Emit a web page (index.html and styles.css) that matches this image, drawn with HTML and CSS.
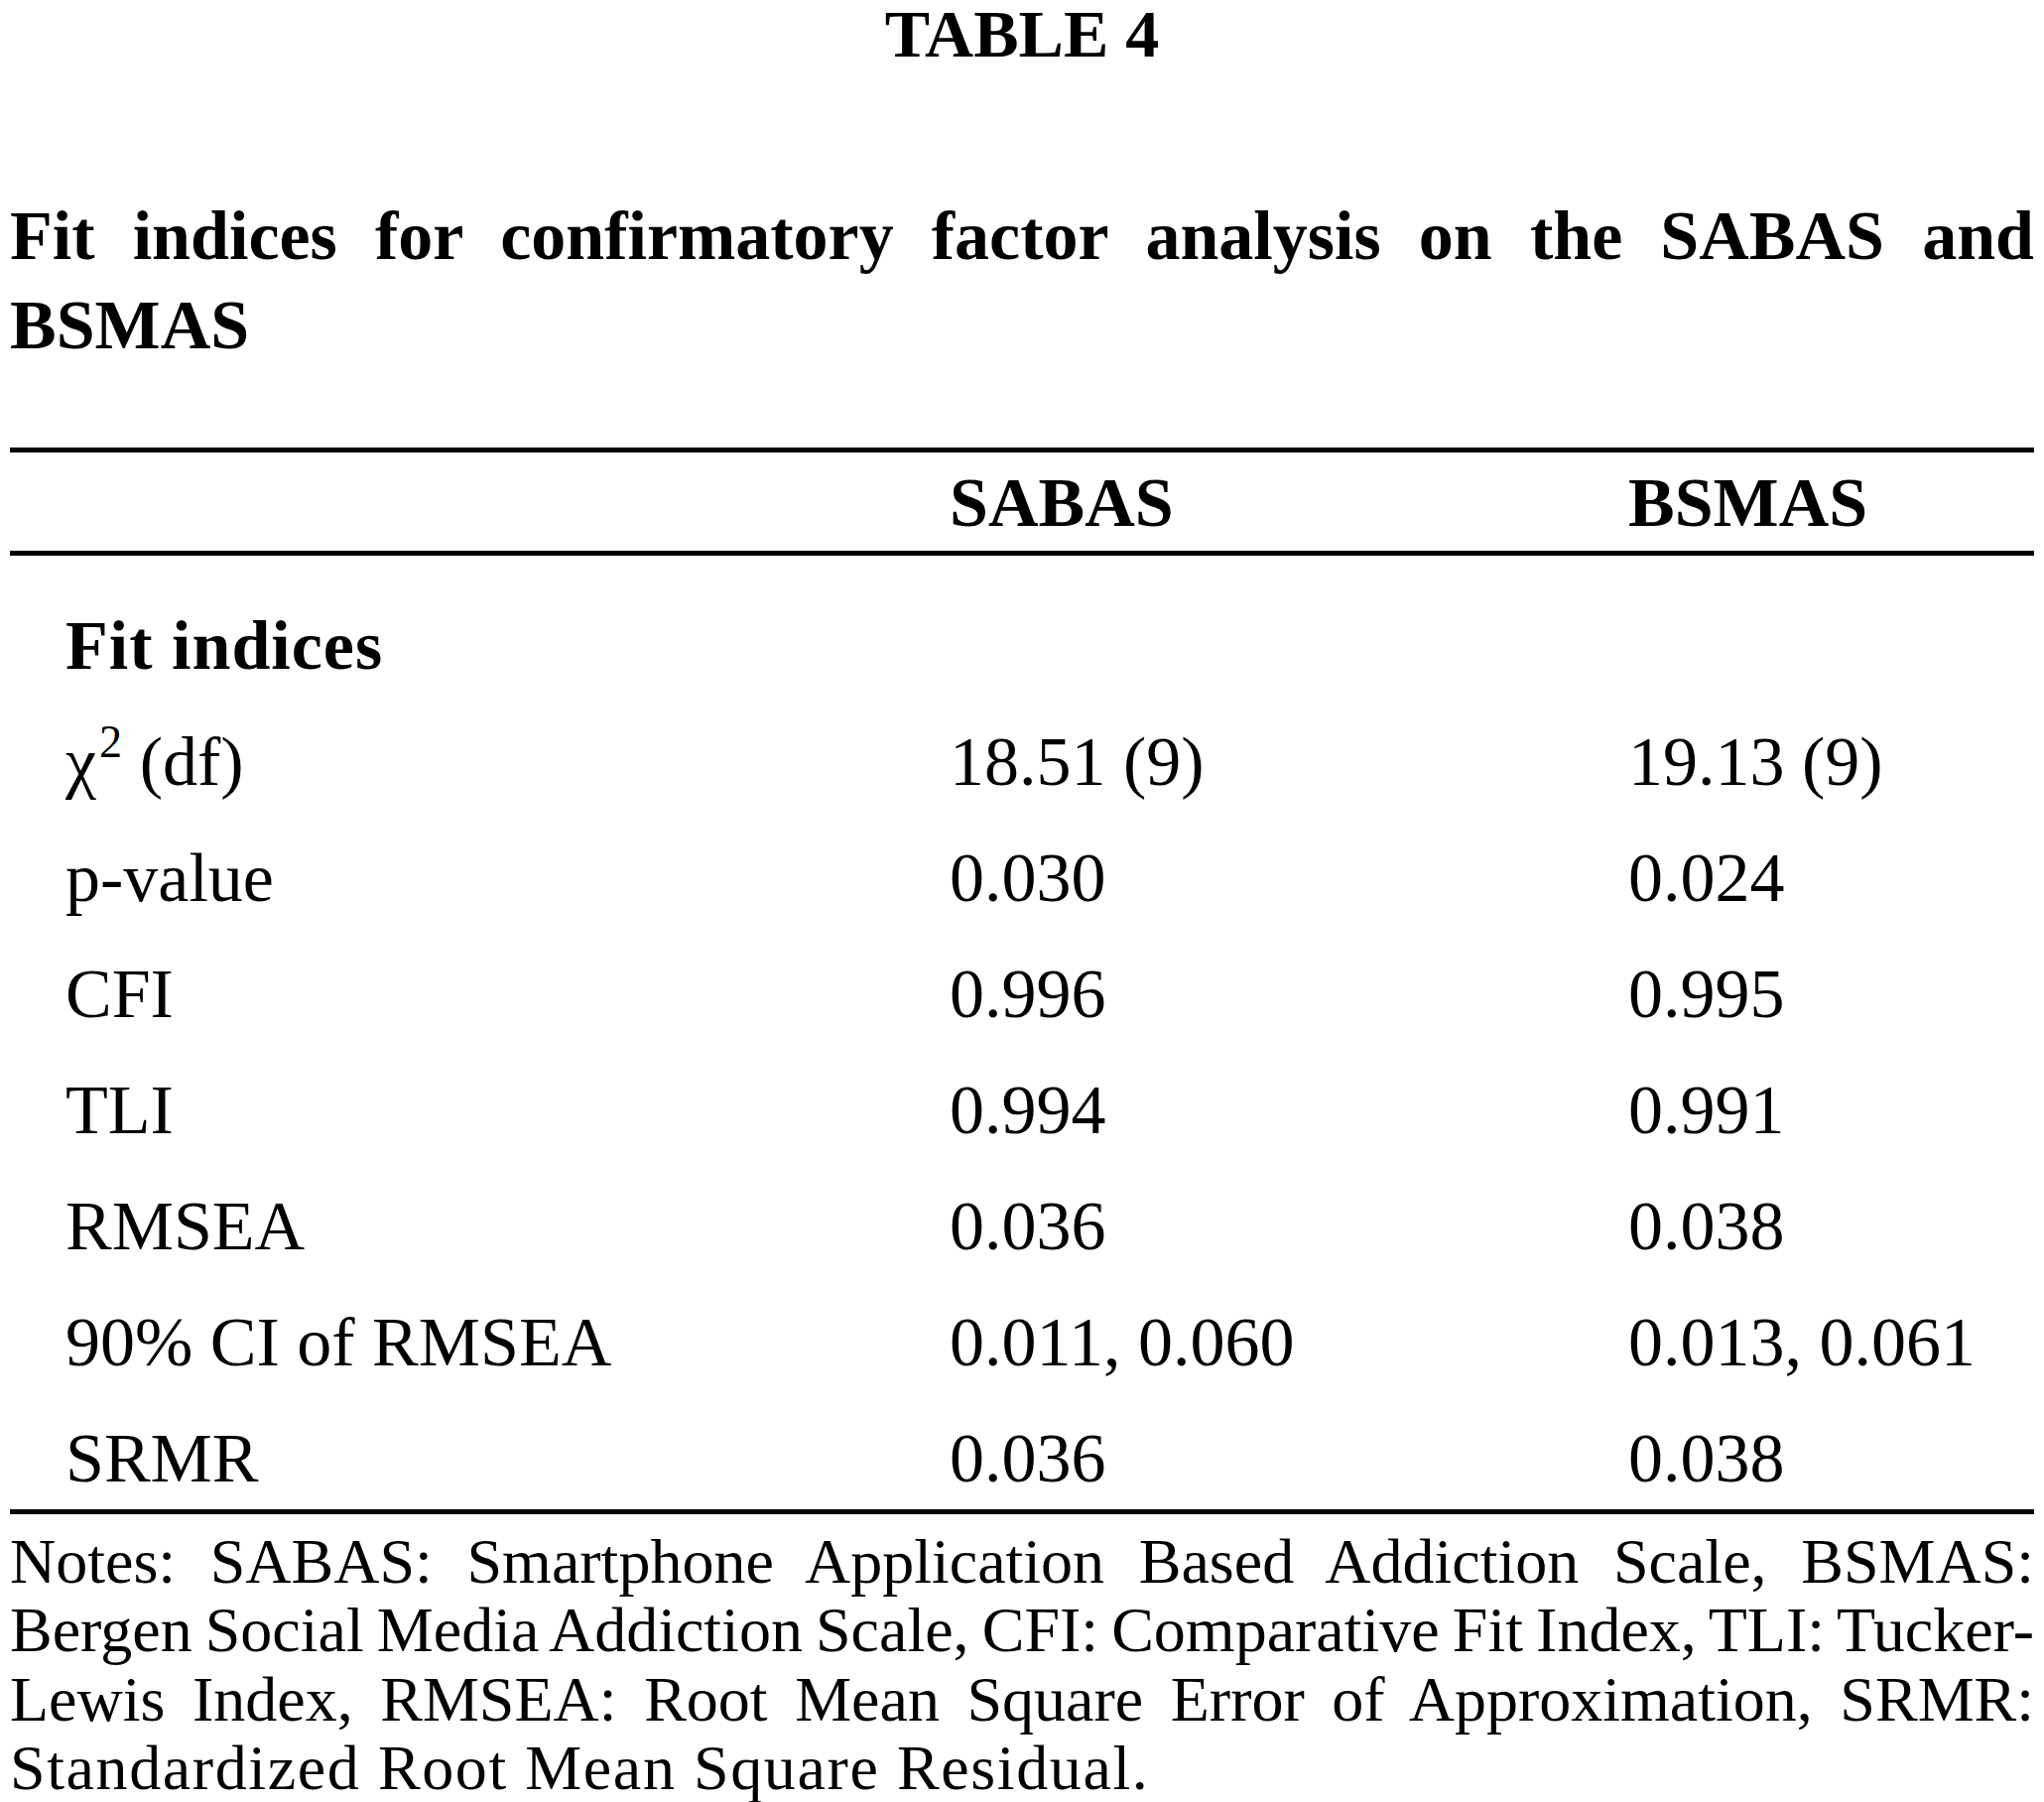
FILE: index.html
```html
<!DOCTYPE html>
<html lang="en">
<head>
<meta charset="utf-8">
<title>Table 4</title>
<link rel="stylesheet" href="styles.css">
</head>
<body>
<main class="page">
  <h1 class="table-label">TABLE 4</h1>
  <h2 class="caption">
    <span class="line justify">Fit indices for confirmatory factor analysis on the SABAS and</span>
    <span class="line">BSMAS</span>
  </h2>
  <table class="fit-table">
    <colgroup>
      <col class="col-label">
      <col class="col-a">
      <col class="col-b">
    </colgroup>
    <thead>
      <tr>
        <th class="cell-label"></th>
        <th>SABAS</th>
        <th>BSMAS</th>
      </tr>
    </thead>
    <tbody>
      <tr class="first">
        <td class="cell-label section">Fit indices</td>
        <td></td>
        <td></td>
      </tr>
      <tr>
        <td class="cell-label">χ<sup class="sup">2</sup> (df)</td>
        <td>18.51 (9)</td>
        <td>19.13 (9)</td>
      </tr>
      <tr>
        <td class="cell-label">p-value</td>
        <td>0.030</td>
        <td>0.024</td>
      </tr>
      <tr>
        <td class="cell-label">CFI</td>
        <td>0.996</td>
        <td>0.995</td>
      </tr>
      <tr>
        <td class="cell-label">TLI</td>
        <td>0.994</td>
        <td>0.991</td>
      </tr>
      <tr>
        <td class="cell-label">RMSEA</td>
        <td>0.036</td>
        <td>0.038</td>
      </tr>
      <tr>
        <td class="cell-label">90% CI of RMSEA</td>
        <td>0.011, 0.060</td>
        <td>0.013, 0.061</td>
      </tr>
      <tr class="last">
        <td class="cell-label">SRMR</td>
        <td>0.036</td>
        <td>0.038</td>
      </tr>
    </tbody>
  </table>
  <p class="notes">
    <span class="line justify">Notes: SABAS: Smartphone Application Based Addiction Scale, BSMAS:</span>
    <span class="line justify tight">Bergen Social Media Addiction Scale, CFI: Comparative Fit Index, TLI: Tucker-</span>
    <span class="line justify">Lewis Index, RMSEA: Root Mean Square Error of Approximation, SRMR:</span>
    <span class="line wide">Standardized Root Mean Square Residual.</span>
  </p>
</main>
</body>
</html>
```
FILE: styles.css
```css
html, body {
  margin: 0;
  padding: 0;
  background: #ffffff;
}

body {
  font-family: "Liberation Serif", "Times New Roman", serif;
  color: #000000;
}

.page {
  width: 2040px;
  padding: 0 10px;
}

.table-label {
  margin: 0;
  font-size: 68px;
  font-weight: bold;
  line-height: 68px;
  text-align: center;
}

.caption {
  margin: 125.4px 0 0;
  font-size: 70px;
  font-weight: bold;
  line-height: 90px;
}

.line {
  display: block;
  text-align: left;
}

.line.justify {
  text-align: justify;
  text-align-last: justify;
}

.fit-table {
  margin-top: 77.6px;
  width: 2040px;
  table-layout: fixed;
  border-collapse: separate;
  border-spacing: 0;
  font-size: 70px;
}

.col-label { width: 947px; }
.col-a { width: 684px; }
.col-b { width: 409px; }

.fit-table th {
  border-top: 5px solid #000;
  border-bottom: 5px solid #000;
  padding: 2px 0 0;
  line-height: 97px;
  font-weight: bold;
  text-align: left;
  white-space: nowrap;
}

.fit-table td {
  padding: 0 0 18px;
  line-height: 99px;
  text-align: left;
  white-space: nowrap;
  vertical-align: top;
}

.fit-table .cell-label {
  padding-left: 56px;
}

.fit-table tr.first td {
  padding-top: 41px;
}

.fit-table tr.last td {
  padding-bottom: 2px;
  border-bottom: 5px solid #000;
}

.section {
  font-weight: bold;
  letter-spacing: 1px;
}

.sup {
  font-size: 0.66em;
  line-height: 0;
  vertical-align: 0.6em;
  margin-left: 3px;
}

.notes {
  margin: 13px 0 0;
  font-size: 64px;
  line-height: 69.3px;
}

.notes .tight {
  word-spacing: -8px;
}

.notes .wide {
  letter-spacing: 1.6px;
}
```
